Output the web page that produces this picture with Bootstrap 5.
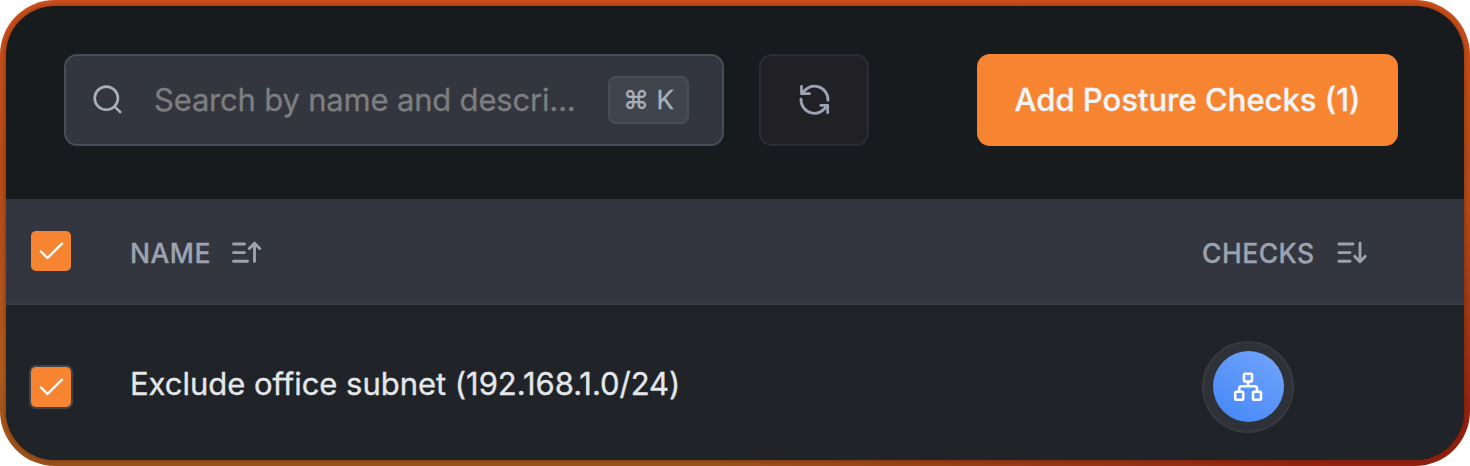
<!DOCTYPE html>
<html lang="en">
<head>
<meta charset="utf-8">
<meta name="viewport" content="width=device-width, initial-scale=1">
<title>Posture Checks</title>
<link href="https://cdn.jsdelivr.net/npm/bootstrap@5.3.0/dist/css/bootstrap.min.css" rel="stylesheet">
<style>
body{font-family:Inter,"Liberation Sans",sans-serif;background:#fff;overflow:hidden}
svg{display:block;flex:none;fill:none;stroke:currentColor;stroke-linecap:round;stroke-linejoin:round}
.frame{height:466px;padding:6px;border-radius:55px;background:
 radial-gradient(ellipse 750px 280px at 100% 100%,#94200f 15%,transparent 100%),
 linear-gradient(180deg,#cb501b 0,#b84a17 35%,#b05a1c 80%,#9c521b 100%)}
.panel{height:454px;border-radius:49px;background:#181b1d;box-shadow:0 0 5px rgba(60,20,0,.5)}
.toolbar{height:193px;padding:48px 66px 0 58px}
.search{width:660px;height:92px;border:2px solid #474e57;border-radius:13px;background:#34363f;padding:0 33px 0 23px;color:#a7b1bc}
.search input{width:426px;margin-left:29px;padding:0;border:0;background:none;outline:0;color:#7e8083;font-size:31px;line-height:40px;letter-spacing:-.19px;-webkit-text-stroke:.3px #7c7e80;text-overflow:ellipsis}
.search input::placeholder{color:#7c7e80;opacity:1}
.keys{width:81px;height:48px;border:2px solid #474e57;border-radius:8px;background:#40444c;color:#a7b1bc;font:400 26px/1 Inter,sans-serif;-webkit-text-stroke:.3px #a7b1bc;padding:0;margin-left:auto;white-space:pre}
.reload{width:110px;height:92px;margin-left:35px;border:2px solid #282d34;border-radius:13px;background:#212125;color:#9ca3b2;padding:0}
.add{width:421px;height:92px;border:0;border-radius:13px;background:#f78431!important;color:#f3f4f6!important;font-size:31px;font-weight:500;-webkit-text-stroke:.35px #f3f4f6;padding:0}
.thead-row{height:106px;background:#34363f;border-bottom:2px solid #3a3b42;color:#9ca3b0;padding:0 0 0 25px}
.thead-row .label{font-size:26.5px;font-weight:500;letter-spacing:.5px;line-height:36px;-webkit-text-stroke:.3px #9ca3b0}
.head-group{padding-top:3px}
.head-group svg{margin-top:-1px}
.body-row{height:155px;background:#202327;border-radius:0 0 49px 49px;padding:8px 0 0 25px;color:#e4e7e9}
.tick{width:40px;height:40px;border-radius:5px;background:#f78431;color:#fff;flex:none}
.ring{box-shadow:0 0 0 2px #3e434b}
.name-col{width:1131px;padding-left:59px}
.rule-name{font-size:31px;line-height:40px;letter-spacing:-.03px;padding-bottom:5px;-webkit-text-stroke:.35px #e4e7e9}
.disc{width:92px;height:92px;border:2px solid #37393e;background:#2e3138}
.disc-in{width:71px;height:71px;background:linear-gradient(35deg,#4285f7,#74a6fb);color:#fff}
</style>
</head>
<body>
<main class="frame">
 <div class="panel">
  <div class="toolbar d-flex align-items-start">
   <div class="search d-flex align-items-center">
    <svg width="36" height="36" viewBox="0 0 36 36" stroke-width="2.6"><circle cx="17.3" cy="16.2" r="11.6"/><path d="M25.6 24.6l5.6 5.4"/></svg>
    <input type="text" placeholder="Search by name and descri..." aria-label="Search">
    <kbd class="keys d-flex align-items-center justify-content-center">⌘ K</kbd>
   </div>
   <button class="btn reload d-flex align-items-center justify-content-center" aria-label="Refresh"><svg width="36" height="36" viewBox="0 0 36 36" stroke-width="2.8"><path d="M5.5 4.5v7.2h8M6.4 11.7A13.5 13.5 0 0 1 32 18.2M5 17.2A13.5 13.5 0 0 0 30.8 23.3M24.8 23.3h6.9v7.4"/></svg></button>
   <button class="btn add ms-auto">Add Posture Checks (1)</button>
  </div>
  <div class="thead-row d-flex align-items-center">
   <span class="tick"><svg width="40" height="40" viewBox="0 0 40 40" stroke-width="2.4"><path d="M10 20.5l6.5 6.5L31 12.7"/></svg></span>
   <div class="name-col head-group d-flex align-items-center"><span class="label">NAME</span>
    <svg class="ms-3" width="36" height="30" viewBox="0 0 36 30" stroke-width="2.9"><path d="M6.5 7H17.5M6.5 15.6H17.5M6.5 24.3H20.5M27.5 24.5V6.2M22.3 11.5l5.2-5.3 5.2 5.3"/></svg></div>
   <div class="head-group d-flex align-items-center"><span class="label">CHECKS</span>
    <svg class="ms-3" width="36" height="30" viewBox="0 0 36 30" stroke-width="2.9"><path d="M8 7h14M8 15.6h11M8 24.3h11M29 6.2v18.3M23.8 19.4l5.2 5.3 5.2-5.3"/></svg></div>
  </div>
  <div class="body-row d-flex align-items-center">
   <span class="tick ring"><svg width="40" height="40" viewBox="0 0 40 40" stroke-width="2.4"><path d="M10 20.5l6.5 6.5L31 12.7"/></svg></span>
   <div class="name-col"><div class="rule-name">Exclude office subnet (192.168.1.0/24)</div></div>
   <div class="disc rounded-circle d-flex align-items-center justify-content-center"><span class="disc-in rounded-circle d-flex align-items-center justify-content-center">
    <svg width="36" height="36" viewBox="0 0 36 36" stroke-width="2.6"><rect x="14" y="4.7" width="8" height="7.8" rx="1.2"/><rect x="5.2" y="22.8" width="8" height="8" rx="1.2"/><rect x="23" y="22.8" width="8" height="8" rx="1.2"/><path d="M18 12.5v4.7M9.2 22.8v-3.3q0-2.2 2.2-2.2h13.4q2.2 0 2.2 2.2v3.3"/></svg></span></div>
  </div>
 </div>
</main>
<script src="https://cdn.jsdelivr.net/npm/bootstrap@5.3.0/dist/js/bootstrap.bundle.min.js"></script>
</body>
</html>
